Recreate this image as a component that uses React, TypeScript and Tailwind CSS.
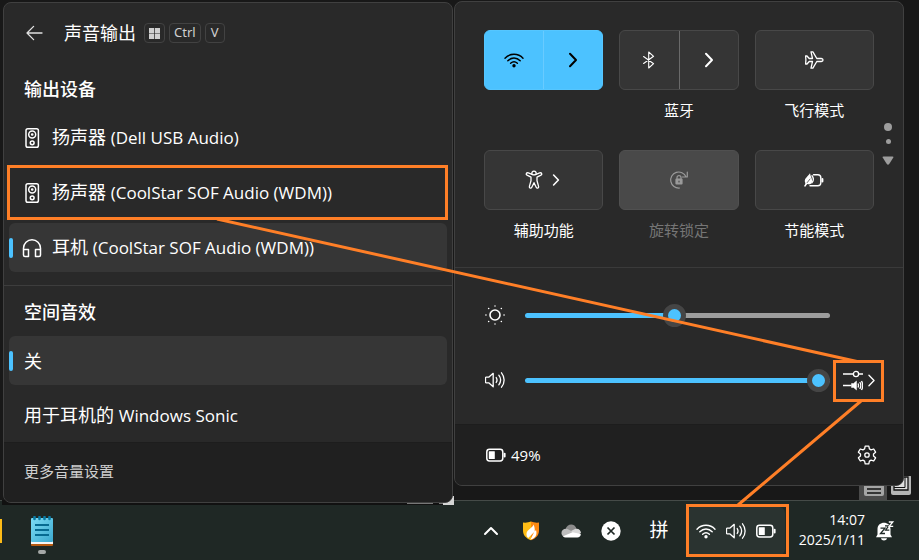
import { useState } from "react";
import type { ReactNode } from "react";

type IconProps = { className?: string };

function Stroke({ className = "size-5", width = 1.3, children }: { className?: string; width?: number; children: ReactNode }) {
  return (
    <svg viewBox="0 0 20 20" className={className} fill="none" stroke="currentColor" strokeWidth={width} strokeLinecap="round" strokeLinejoin="round" aria-hidden="true">
      {children}
    </svg>
  );
}

const BackIcon = () => (
  <Stroke>
    <path d="M9.6 3.4 3 10l6.6 6.6M3 10h15" />
  </Stroke>
);

const SpeakerBoxIcon = () => (
  <Stroke width={1.5}>
    <rect x="4" y="0.8" width="12.4" height="18.4" rx="1.8" />
    <circle cx="10.2" cy="6.5" r="3.5" />
    <circle cx="10.2" cy="6.5" r="0.6" fill="currentColor" />
    <circle cx="10.2" cy="14.8" r="1.9" />
  </Stroke>
);

const HeadphonesIcon = () => (
  <Stroke width={1.5}>
    <path d="M1.5 17V10.200a8.500 8.500 0 0 1 17 0V17q0 1.500-1.500 1.500h-3.500v-7h5M1.500 11.500h5v7H3q-1.500 0-1.500-1.500" />
  </Stroke>
);

function WifiIcon({ className }: IconProps) {
  return (
    <Stroke className={className} width={1.4}>
      <path d="M1 8.200C5.800 3 14.200 3 19 8.200M3.800 10.800c3.600-3.700 8.800-3.700 12.400 0M6.600 13.300c2-1.900 4.800-1.900 6.800 0" />
      <circle cx="10" cy="15.7" r="1" fill="currentColor" />
    </Stroke>
  );
}

function ChevronRight({ className = "size-5", width = 2 }: { className?: string; width?: number }) {
  return (
    <Stroke className={className} width={width}>
      <path d="M7 3.800 13 10l-6 6.200" />
    </Stroke>
  );
}

const BluetoothIcon = () => (
  <Stroke width={1.1}>
    <path d="m4.600 6.500 10 7.200L9.700 18V2l4.900 4.300-10 7.200" />
  </Stroke>
);

const PlaneIcon = () => (
  <Stroke width={1.3}>
    <path d="M17.300 8.500c2.300.3 2.300 2.700 0 3h-4.500l-3.900 6.700H7l1.500-6.700H5.200L3 14H1.600l.3-4-.3-4H3l2.200 2.500h3.300L7 1.800h1.900l3.900 6.700z" />
  </Stroke>
);

const AccessibilityIcon = () => (
  <Stroke width={1.3}>
    <path d="M8 4.300a2.200 2.200 0 1 1 4 0" />
    <path d="M8 4.300 4.300 2.900c-2-.6-2.800 1.500-1.300 2.300l4 2v3.600l-1.600 5.600c-.4 1.700 1.600 2.400 2.400.8L10 12.700l2.200 4.500c.8 1.600 2.800.9 2.400-.8L13 10.800V7.200l4-2c1.500-.8.7-2.900-1.300-2.300L12 4.300q-2 1-4 0" />
  </Stroke>
);

const RotationLockIcon = () => (
  <Stroke width={1.2}>
    <path d="M10.500 18A8 8 0 1 1 17 6.800M18.300 2v5h-5" />
    <path d="M8 9V7.700a2 2 0 0 1 4 0V9" />
    <rect x="7" y="9" width="6" height="5" rx="0.5" fill="currentColor" />
    <path d="M10 11.200v.8" stroke="#484848" />
  </Stroke>
);

const EnergySaverIcon = () => (
  <Stroke width={1.4}>
    <path d="M9.500 4.800h4.300q3 0 3 3v4.900q0 3-3 3H6" />
    <path d="M18.400 9v2.400" strokeWidth="2" />
    <path d="M1.400 13.200C-.6 9 2.800 7.500 6 3.200c.4 3.200 2.500 5 2 8.300-.4 2.700-3 3.500-5.200 2.300l-1.400 2" fill="currentColor" stroke="none" />
    <path d="m.9 16 1.700-2.500" />
    <path d="M8 5.800c1.900 2.400 1.900 4.800-.2 7" />
    <path d="M3.200 12.600 6 9" stroke="#353535" strokeWidth="0.7" />
  </Stroke>
);

const SunIcon = () => (
  <Stroke width={1.6}>
    <circle cx="10" cy="10" r="5" />
    <path d="M10 .9v.1M10 19v.1M.9 10H1M19 10h.1M3.600 3.600h.1M16.300 3.600h.1M3.600 16.400h.1M16.300 16.400h.1" strokeWidth="1.5" />
  </Stroke>
);

function VolumeIcon({ className }: IconProps) {
  return (
    <Stroke className={className} width={1.3}>
      <path d="M1.200 7.200q-.7 0-.7.8v4q0 .8.700.8h2.500l4.500 3.900V3.300L3.700 7.200z" />
      <path d="M11.200 7.500c1 1.500 1 3.500 0 5M13.800 5.200c2.200 2.900 2.200 6.700 0 9.600M16.500 2.800c3.500 4.300 3.500 10.100 0 14.400" />
    </Stroke>
  );
}

function BatteryIcon() {
  return (
    <Stroke width={1.5}>
      <rect x="0.8" y="4.200" width="16" height="11.8" rx="2.7" />
      <rect x="2.800" y="6.300" width="6" height="7.600" rx="0.5" fill="currentColor" stroke="none" />
      <path d="M18.600 8.700v2.800" strokeWidth="2" />
    </Stroke>
  );
}

const GearIcon = () => (
  <Stroke width={1.3}>
    <circle cx="10" cy="10" r="2.2" />
    <path d="M8.200 1.200h3.600l.6 2.700 1.700 1 2.600-.9 1.900 3.200-2.100 1.800v2l2.100 1.800-1.900 3.200-2.600-.9-1.700 1-.6 2.700H8.200l-.6-2.700-1.700-1-2.600.9-1.900-3.200L3.500 11V9L1.400 7.200 3.300 4l2.600.9 1.700-1z" />
  </Stroke>
);

const MixerIcon = () => (
  <svg viewBox="0 0 20 22" className="h-[22px] w-5" fill="none" stroke="currentColor" strokeWidth="1.3" aria-hidden="true">
    <path d="M0 5h10M16 5h4M0 16.500h8.500" />
    <circle cx="13" cy="5" r="2.6" />
    <path d="M8.500 14.500h2l3-2.500v9l-3-2.500h-2z" fill="currentColor" strokeWidth="0.5" />
    <path d="M15 14.500q1 2 0 4M16.800 13q2 3.500 0 7M18.500 12q2.500 4.500 0 9" />
  </svg>
);

const Latin = ({ children }: { children: ReactNode }) => <span className="text-[17px]">{children}</span>;

function OptionRow({ selected = false, icon, children }: { selected?: boolean; icon?: ReactNode; children: ReactNode }) {
  return (
    <button className={`relative flex h-[49px] w-full items-center gap-2.5 rounded-md text-left text-lg whitespace-nowrap ${icon ? "pl-[13px]" : "pl-[15px]"} ${selected ? "bg-[#363636]" : ""}`}>
      {selected && <span className="absolute top-[15px] left-0 h-5 w-1 rounded-full bg-[#4cc2ff]" />}
      {icon}
      <span>{children}</span>
    </button>
  );
}

const Heading = ({ children }: { children: ReactNode }) => (
  <h2 className="flex h-[50px] items-center pt-0.5 pl-[15px] text-lg font-medium">{children}</h2>
);

const Key = ({ children }: { children: ReactNode }) => (
  <kbd className="flex h-5 min-w-5 items-center justify-center rounded-[4px] border border-[#424242] px-1 font-['Noto_Sans',sans-serif] text-[13px] text-[#d0d0d0]">{children}</kbd>
);

function SoundOutputPanel() {
  return (
    <section className="relative z-10 mt-0.5 -mb-1 flex min-w-0 flex-1 flex-col self-start overflow-hidden rounded-lg border border-[#404040] bg-[#292929] text-white">
      <header className="flex h-[60px] items-center pl-5">
        <button aria-label="返回" className="text-[#e0e0e0]"><BackIcon /></button>
        <h1 className="ml-5 text-lg">声音输出</h1>
        <div className="ml-2 flex gap-1">
          <Key>
            <svg viewBox="0 0 12 12" className="size-[11px]" fill="currentColor" aria-hidden="true">
              <path d="M0 0h5.600v5.600H0zM6.400 0H12v5.600H6.400zM0 6.400h5.600V12H0zM6.400 6.400H12V12H6.400z" />
            </svg>
          </Key>
          <Key>Ctrl</Key>
          <Key>V</Key>
        </div>
      </header>
      <div className="border-b border-[#3d3d3d] px-[5px] pb-[13px]">
        <Heading>输出设备</Heading>
        <div className="flex flex-col gap-1.5">
          <OptionRow icon={<SpeakerBoxIcon />}>扬声器 <Latin>(Dell USB Audio)</Latin></OptionRow>
          <OptionRow icon={<SpeakerBoxIcon />}>扬声器 <Latin>(CoolStar SOF Audio (WDM))</Latin></OptionRow>
          <OptionRow selected icon={<HeadphonesIcon />}>耳机 <Latin>(CoolStar SOF Audio (WDM))</Latin></OptionRow>
        </div>
      </div>
      <div className="px-[5px] pb-0.5">
        <Heading>空间音效</Heading>
        <div className="flex flex-col gap-1.5">
          <OptionRow selected>关</OptionRow>
          <OptionRow>用于耳机的 <Latin>Windows Sonic</Latin></OptionRow>
        </div>
      </div>
      <footer className="flex h-[60px] items-center border-t border-[#1d1d1d] bg-[#202020] pb-0.5 pl-5">
        <a href="#sound" className="text-[15px] text-[#cfcfcf]">更多音量设置</a>
      </footer>
    </section>
  );
}

function Tile({ label, disabled = false, children }: { label: string; disabled?: boolean; children: ReactNode }) {
  return (
    <div className="flex flex-col items-center">
      <button aria-label={label} disabled={disabled} className={`flex h-[60px] w-full items-center justify-center gap-1 rounded-md border ${disabled ? "border-[#505050] bg-[#494949] text-[#9a9a9a]" : "border-[#484848] bg-[#353535]"}`}>
        {children}
      </button>
      <span className={`mt-2.5 text-[15px] leading-5 ${disabled ? "text-[#757575]" : ""}`}>{label}</span>
    </div>
  );
}

function SplitTile({ label, name, active = false, icon }: { label?: string; name: string; active?: boolean; icon: ReactNode }) {
  return (
    <div className="flex flex-col items-center">
      <div className={`flex h-[60px] w-full overflow-hidden rounded-md border ${active ? "border-[#55c6ff] bg-[#4cc2ff] text-black" : "border-[#484848] bg-[#353535]"}`}>
        <button aria-label={name} aria-pressed={active} className={`flex flex-1 items-center justify-center border-r ${active ? "border-[#69cbff]" : "border-[#6a6a6a]"}`}>{icon}</button>
        <button aria-label={`${name} 详情`} className="flex flex-1 items-center justify-center"><ChevronRight /></button>
      </div>
      {label && <span className="mt-2.5 text-[15px] leading-5">{label}</span>}
    </div>
  );
}

function Slider({ label, initial }: { label: string; initial: number }) {
  const [value, setValue] = useState(initial);
  return (
    <input
      type="range"
      aria-label={label}
      value={value}
      onChange={(e) => setValue(Number(e.target.value))}
      className="h-[5px] min-w-0 flex-1 appearance-none rounded-full [&::-webkit-slider-thumb]:size-[23px] [&::-webkit-slider-thumb]:appearance-none [&::-webkit-slider-thumb]:rounded-full [&::-webkit-slider-thumb]:border-[5px] [&::-webkit-slider-thumb]:border-solid [&::-webkit-slider-thumb]:border-[#454545] [&::-webkit-slider-thumb]:bg-[#4cc2ff]"
      style={{ backgroundImage: `linear-gradient(to right, #4cc2ff ${value}%, #9d9d9d ${value}%)` }}
    />
  );
}

function QuickSettingsPanel() {
  return (
    <section className="relative z-10 mt-px flex min-w-0 flex-1 flex-col self-start overflow-hidden rounded-lg border border-[#404040] bg-[#292929] text-white">
      <div className="relative border-b border-[#3a3a3a] px-[29px] pt-7 pb-[27px]">
        <div className="grid grid-cols-3 gap-x-4 gap-y-[30px]">
          <SplitTile name="WLAN" active icon={<WifiIcon />} />
          <SplitTile name="蓝牙" label="蓝牙" icon={<BluetoothIcon />} />
          <Tile label="飞行模式"><PlaneIcon /></Tile>
          <Tile label="辅助功能"><AccessibilityIcon /><ChevronRight className="size-4" /></Tile>
          <Tile label="旋转锁定" disabled><RotationLockIcon /></Tile>
          <Tile label="节能模式"><EnergySaverIcon /></Tile>
        </div>
        <div className="absolute top-[121px] right-[9px] flex w-3 flex-col items-center text-[#9d9d9d]">
          <span className="size-2 rounded-full bg-current" />
          <span className="mt-2 size-[5px] rounded-full bg-current" />
          <svg viewBox="0 0 12 9" className="mt-3 h-[9px] w-3" fill="currentColor" aria-hidden="true"><path d="M1.500.5h9q1.500 0 .7 1.300L7.200 8q-1.200 1.300-2.400 0L.8 1.800Q0 .5 1.500.5" /></svg>
        </div>
      </div>
      <div className="flex flex-col gap-[25px] pt-[27px] pb-6 pl-[30px]">
        <div className="flex h-10 items-center gap-5 pr-[73px]">
          <SunIcon />
          <Slider label="亮度" initial={49} />
        </div>
        <div className="flex h-10 items-center gap-5 pr-[23px]">
          <VolumeIcon />
          <Slider label="音量" initial={100} />
          <button aria-label="选择声音输出" className="-ml-2 flex w-[38px] items-center justify-end">
            <MixerIcon />
            <ChevronRight className="size-[17px]" width={1.6} />
          </button>
        </div>
      </div>
      <footer className="flex h-[61px] items-center border-t border-[#1d1d1d] bg-[#202020] pr-[26px] pl-[31px]">
        <BatteryIcon />
        <span className="ml-[5px] text-[15px]">49%</span>
        <button aria-label="所有设置" className="ml-auto"><GearIcon /></button>
      </footer>
    </section>
  );
}

const NotepadIcon = () => (
  <svg viewBox="0 0 22 30" className="h-[30px] w-[22px]" aria-hidden="true">
    <defs>
      <linearGradient id="pad" x1="0" y1="0" x2="1" y2="1"><stop stopColor="#7ddcf5" /><stop offset="1" stopColor="#3ba9cf" /></linearGradient>
    </defs>
    <rect y="24" width="22" height="6" rx="1" fill="#b75a10" />
    <rect y="23" width="22" height="5" fill="#f5f5f5" />
    <rect y="2" width="22" height="24" rx="1" fill="url(#pad)" />
    <path d="M4 9h14M4 14h14M4 19h14" stroke="#066a91" strokeWidth="1.8" />
    <path d="M3.500 1v2M8.500 1v2M13.500 1v2M18.500 1v2" stroke="#087aa3" strokeWidth="2.6" strokeLinecap="round" />
  </svg>
);

const ShieldIcon = () => (
  <svg viewBox="0 0 18 20" className="h-5 w-[18px]" aria-hidden="true">
    <path d="M1 1.500Q5.500 2 9 .5v18.800C3.500 17 1 14 1 9.500z" fill="#ffbd16" />
    <path d="M17 1.500Q12.500 2 9 .5v18.800c5.500-2.300 8-5.300 8-9.800z" fill="#ff8a12" />
    <path d="M11.500 3.500c-.5 3.500-7 5-7 9.500 0 2 .7 3.200 1.700 4l6-6-3.700 7.500c5-.7 7-5 5.500-9.500l-1.300 1.500c.3-2.500-.2-5-1.200-7" fill="#fff" />
  </svg>
);

const CloudIcon = () => (
  <svg viewBox="0 0 20 14" className="h-3.5 w-5" aria-hidden="true">
    <path d="M4.500 5.500C6-1 14-1 15.500 4.800L9 9z" fill="#8c8c8c" />
    <path d="M1 11C-1 7 3 3.500 7 5.200L14 9 6 13H4q-2.200 0-3-2" fill="#bdbdbd" />
    <path d="m10 7 4-2c3-1.200 6 1 6 4l-5 3z" fill="#d8d8d8" />
    <path d="m2 12.300 9.500-4L19.800 10c0 2-1.500 3.500-3.500 3.500H4.500Q3 13.500 2 12.300" fill="#fff" />
  </svg>
);

const BellIcon = () => (
  <svg viewBox="0 0 20 20" className="size-5" aria-hidden="true">
    <path d="M2.500 13.500V8C2.500-.5 15.500-.5 15.500 8v5.500l1.500 2.700H1zM6 17.200h6c-.5 3-5.500 3-6 0" fill="#fff" />
    <path d="M5.500 7.200H10l-4.500 5.300H10" fill="none" stroke="#202a27" strokeWidth="1.3" />
    <path d="M10 4.800h3.800l-3.300 4.400h3.800" fill="none" stroke="#202a27" strokeWidth="1.2" />
    <path d="M13.800 1h4l-3.600 4.300h4" fill="none" stroke="#fff" strokeWidth="1.3" />
  </svg>
);

function Taskbar() {
  const tray = "flex h-12 w-10 items-center justify-center";
  return (
    <nav className="flex h-[60px] items-center border-t border-[#454b48] bg-[#1f2825] text-white">
      <span className="h-6 w-0.5 bg-[#fdbb17]" />
      <button aria-label="记事本" className="ml-[29px] flex flex-col items-center gap-1 pt-2 text-[#a5a8a7]">
        <NotepadIcon />
        <span className="h-1 w-2 rounded-full bg-current" />
      </button>
      <div className="ml-auto flex items-center">
        <button aria-label="显示隐藏的图标" className={tray}>
          <Stroke width={2}><path d="m4 13 6-6 6 6" /></Stroke>
        </button>
        <button aria-label="安全中心" className={tray}><ShieldIcon /></button>
        <button aria-label="云盘" className={tray}><CloudIcon /></button>
        <button aria-label="同步" className={tray}>
          <svg viewBox="0 0 20 20" className="size-5" aria-hidden="true"><circle cx="10" cy="10" r="9.700" fill="#fff" /><path d="m6.500 6.500 7 7m0-7-7 7" stroke="#1f2825" strokeWidth="1.7" /></svg>
        </button>
        <button aria-label="输入法" className="flex h-12 w-14 items-center justify-center text-[19px]">拼</button>
        <button aria-label="网络、音量和电池" className="flex h-12 w-[98px] items-center justify-center gap-2.5 rounded-md bg-[#2a3330]">
          <WifiIcon /><VolumeIcon /><BatteryIcon />
        </button>
        <button className="w-20 pb-0.5 text-right text-sm leading-5">
          <time className="block">14:07</time>
          <time className="block">2025/1/11</time>
        </button>
        <button aria-label="通知" className="mr-6 ml-2.5"><BellIcon /></button>
      </div>
    </nav>
  );
}

/* Parts of the windows that show between the panels and the taskbar. */
function BackgroundWindows() {
  return (
    <>
      <div className="absolute right-2 bottom-0 flex h-6 gap-1" aria-hidden="true">
        <svg viewBox="0 0 28 24" className="h-6 w-7"><path d="M0 0h28v24H0z" fill="#4a4a4a" /><rect x="5" y="2" width="20" height="18" rx="2" fill="#a5a5a5" /><path d="M8 13h14M8 17h14" stroke="#111" strokeWidth="1.3" /></svg>
        <svg viewBox="0 0 20 24" className="h-6 w-5"><rect y="-1" width="20" height="20" rx="2" fill="#b5b5b5" /><path d="M3 1h14v13H3z" fill="#dedede" stroke="#111" strokeWidth="1.3" /><path d="M3 11.500h11V1" stroke="#111" fill="none" /></svg>
      </div>
      <svg viewBox="0 0 452 9" className="absolute -bottom-[5px] left-0.5 h-[9px] w-[452px]" aria-hidden="true">
        <path d="M0 4h452v5H0z" fill="#111" />
        <path d="M405 7.500h26M437 7.500h4" stroke="#777" />
        <path d="M441 9V0h11v9z" fill="#d5d5d5" />
      </svg>
    </>
  );
}

/* Callouts that link the device, the mixer button and the tray. */
function Callouts() {
  return (
    <svg viewBox="0 0 919 560" className="pointer-events-none absolute top-0 left-0 z-20 h-[560px] w-[919px]" fill="none" stroke="#ff7f27" strokeWidth="3" aria-hidden="true">
      <path d="M8.500 166.500h438v52H8.500zM834.500 361.500h48v39h-48zM687.500 505.500h100v50h-100zM217 219l640 142.500M861 401 738 505" />
    </svg>
  );
}

export default function App() {
  return (
    <div className="relative flex min-h-screen flex-col overflow-hidden bg-[#181818] font-['Open_Sans','Noto_Sans_CJK_SC',sans-serif]">
      <main className="relative flex flex-1 gap-px pr-[15px] pl-[3px]">
        <BackgroundWindows />
        <SoundOutputPanel />
        <QuickSettingsPanel />
      </main>
      <Taskbar />
      <Callouts />
    </div>
  );
}
